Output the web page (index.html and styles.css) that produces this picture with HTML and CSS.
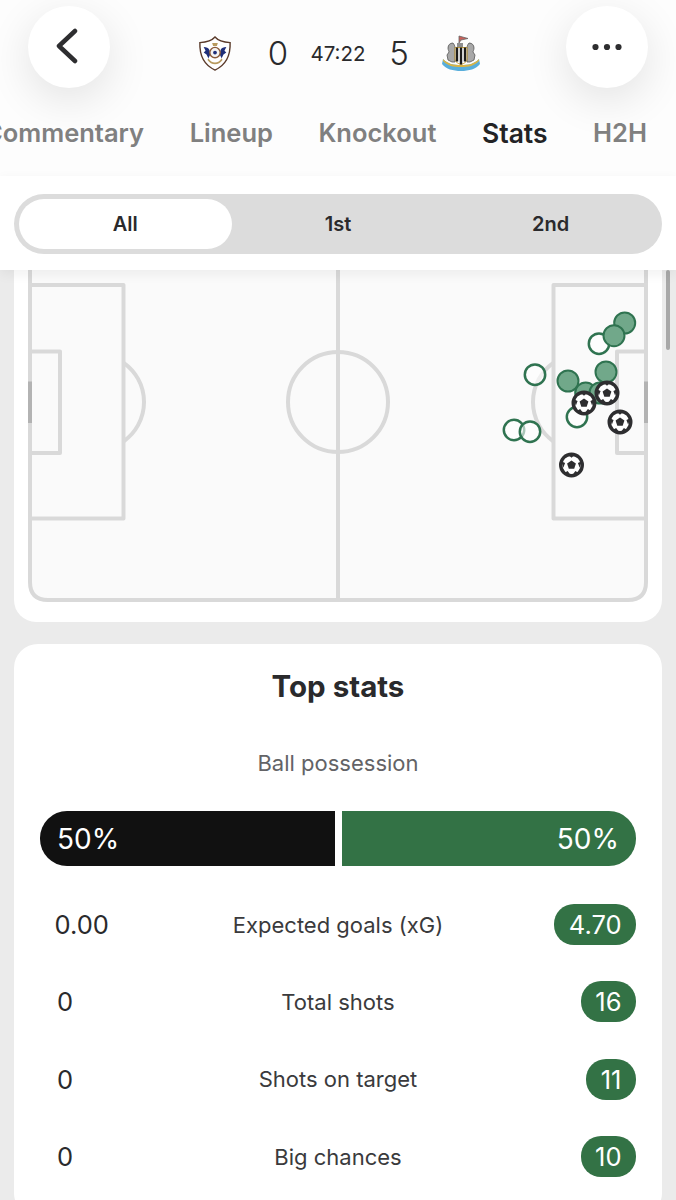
FILE: index.html
```html
<!DOCTYPE html>
<html lang="en">
<head>
<meta charset="utf-8">
<title>Stats</title>
<link rel="stylesheet" href="styles.css">
</head>
<body>
<div class="screen">
  <svg class="defs" width="0" height="0" aria-hidden="true">
    <symbol id="ball" viewBox="-13 -13 26 26">
      <circle r="10.800" class="ball-body"/>
      <path class="ball-spot" d="M0-4.600 4.400-1.400 2.700 3.700H-2.700L-4.400-1.400Z"/>
      <path class="ball-mark" d="M-3.600-10.500H3.600L0-7.200Z M10.200-3.700 8.200 2.800 6.400-1.900Z M7.200 8 .9 10 3.900 6Z M-7.200 8-.9 10-3.900 6Z M-10.200-3.700-8.200 2.800-6.400-1.900Z"/>
    </symbol>
  </svg>

  <header class="header">
    <div class="topbar">
      <button class="round-btn" aria-label="Back">
        <svg class="back-icon" width="26" height="36" viewBox="0 0 26 36"><path d="M21 3 5 18l16 15"/></svg>
      </button>
      <div class="score">
        <svg class="crest crest-home" width="34" height="37" viewBox="0 0 36 38">
          <path class="q-shield" d="M18 1.500C21 5 27 7 34 7.500 34.500 21 30 31 18 36.500 6 31 1.500 21 2 7.500 9 7 15 5 18 1.500Z"/>
          <path class="q-blue" d="M6 12c3 0 5 1 6 3l1 5-2 4-2-4-3-2 2-2ZM30 12c-3 0-5 1-6 3l-1 5 2 4 2-4 3-2-2-2Z"/>
          <path class="q-gold" d="M11 24c3 6 11 6 14 0l1 2c-4 6-12 6-16 0ZM15 8h6l-1 3h-4Z"/>
          <circle class="q-ball" cx="18" cy="18" r="5.500"/>
          <circle class="q-spot" cx="18" cy="18" r="2"/>
        </svg>
        <span class="goal">0</span>
        <span class="clock">47:22</span>
        <span class="goal goal-away">5</span>
        <svg class="crest crest-away" width="38" height="37" viewBox="0 0 38 37">
          <path class="n-flag" d="M17 8V1l9 2.500-7 1.500Z"/>
          <path class="n-tower" d="M15 8h6v5h-6Z"/>
          <path class="n-horse" d="M11 8c-3 0-5 2-5 5 0 2 1 3 1 4l-2 3 1 5 4 2h3V13c0-2-1-4-2-5ZM27 8c3 0 5 2 5 5 0 2-1 3-1 4l2 3-1 5-4 2h-3V13c0-2 1-4 2-5Z"/>
          <path class="n-shield" d="M13 12.500h12V24c0 3-3 4.500-6 5.500-3-1-6-2.500-6-5.500Z"/>
          <path class="n-stripes" d="M15 12.500v14M19 12.500v17M23 12.500v14"/>
          <path class="n-ribbon" d="M1 24c5 5 10 6 18 6s13-1 18-6l1 5c-4 5-11 7-19 7S4 34 0 29Z"/>
          <path class="n-gold" d="M1 24c5 5 10 6 18 6s13-1 18-6v2c-5 5-10 6-18 6S6 31 1 26Z"/>
        </svg>
      </div>
      <button class="round-btn" aria-label="More">
        <svg class="dots" width="32" height="8" viewBox="0 0 32 8"><circle cx="4.500" cy="4" r="3.100"/><circle cx="16" cy="4" r="3.100"/><circle cx="27.500" cy="4" r="3.100"/></svg>
      </button>
    </div>
    <nav class="tabs">
      <span class="tab">Commentary</span>
      <span class="tab">Lineup</span>
      <span class="tab">Knockout</span>
      <span class="tab tab-active">Stats</span>
      <span class="tab">H2H</span>
    </nav>
  </header>

  <section class="period-panel">
    <div class="segment">
      <span class="seg seg-active">All</span>
      <span class="seg">1st</span>
      <span class="seg">2nd</span>
    </div>
  </section>

  <main class="content">
    <section class="card pitch-card">
      <svg class="pitch" width="648" height="352" viewBox="14 270 648 352">
        <path class="turf" d="M30 270H646V584Q646 600 630 600H46Q30 600 30 584Z"/>
        <g class="lines">
          <path d="M30 270V582Q30 600 48 600H628Q646 600 646 582V270"/>
          <path d="M338 270V600"/>
          <circle cx="338" cy="402" r="50"/>
          <path d="M30 285H123.500V518.500H30"/>
          <path d="M30 351.500H60V453H30"/>
          <path d="M124 363A48 48 0 0 1 124 441"/>
          <path d="M646 285H553.500V518.500H646"/>
          <path d="M646 351.500H617V453H646"/>
          <path d="M553 363A48 48 0 0 0 553 441"/>
        </g>
        <path class="goal-mark" d="M30 381.500V423M646 381.500V423"/>
        <g class="shot-off">
          <circle cx="599" cy="343.700" r="10.200"/>
          <circle cx="535" cy="374.700" r="10.200"/>
          <circle cx="514" cy="430" r="10.200"/>
          <circle cx="530" cy="431.700" r="10.200"/>
          <circle cx="577" cy="417" r="10.200"/>
        </g>
        <g class="shot-on">
          <circle cx="624.700" cy="323" r="10.500"/>
          <circle cx="614" cy="335.700" r="10.500"/>
          <circle cx="606" cy="372" r="10.500"/>
          <circle cx="568" cy="381" r="10.500"/>
          <circle cx="585.700" cy="393" r="10.500"/>
          <circle cx="600" cy="393" r="10.500"/>
        </g>
        <use href="#ball" x="571" y="390" width="26" height="26"/>
        <use href="#ball" x="594" y="380" width="26" height="26"/>
        <use href="#ball" x="607" y="409" width="26" height="26"/>
        <use href="#ball" x="558.500" y="452" width="26" height="26"/>
      </svg>
    </section>

    <section class="card stats-card">
      <h2 class="stats-title">Top stats</h2>
      <p class="possession-label">Ball possession</p>
      <div class="possession">
        <div class="poss poss-home">50%</div>
        <div class="poss poss-away">50%</div>
      </div>
      <div class="stat-rows">
        <div class="stat-row"><span class="value">0.00</span><span class="stat-name">Expected goals (xG)</span><span class="value value-win">4.70</span></div>
        <div class="stat-row"><span class="value">0</span><span class="stat-name">Total shots</span><span class="value value-win">16</span></div>
        <div class="stat-row"><span class="value">0</span><span class="stat-name">Shots on target</span><span class="value value-win">11</span></div>
        <div class="stat-row"><span class="value">0</span><span class="stat-name">Big chances</span><span class="value value-win">10</span></div>
      </div>
    </section>
  </main>
  <div class="scrollbar"></div>
</div>
</body>
</html>
```

FILE: styles.css
```css
* { box-sizing: border-box; }
html, body { margin: 0; padding: 0; }
body {
  font-family: Inter, "Liberation Sans", sans-serif;
  color: #2a2a2c;
  background: #ebebeb;
}
.screen {
  position: relative;
  width: 676px;
  height: 1200px;
  overflow: hidden;
}
.defs { position: absolute; }

/* Header */
.header {
  height: 176px;
  background: #fdfdfd;
  padding-top: 6px;
  position: relative;
  overflow: hidden;
}
.topbar {
  display: flex;
  justify-content: space-between;
  align-items: flex-start;
  padding: 0 28px;
}
.round-btn {
  width: 82px;
  height: 82px;
  border: 0;
  border-radius: 50%;
  background: #fff;
  box-shadow: 0 12px 44px rgba(0, 0, 0, 0.11);
  display: flex;
  align-items: center;
  justify-content: center;
  padding: 0;
}
.back-icon { fill: none; stroke: #2e2e30; stroke-width: 4.500; stroke-linecap: round; stroke-linejoin: round; margin-left: -4px; margin-top: -3px; }
.dots { fill: #2e2e30; }
.score {
  margin: 28px 0 0 2px;
  display: flex;
  align-items: center;
  gap: 16px;
  height: 38px;
}
.crest { flex: none; }
.crest-home { margin-right: 18px; }
.crest-away { margin-left: 15px; }
.goal { font-size: 33px; font-weight: 300; width: 24px; text-align: center; }
.goal-away { margin-left: 1px; }
.clock { font-size: 20.500px; font-weight: 400; width: 64px; text-align: center; }

.q-shield { fill: #fff; stroke: #5a3a2a; stroke-width: 1.500; }
.q-blue { fill: #1f2f7a; }
.q-gold { fill: #b89a5e; }
.q-ball { fill: #f4f4f4; stroke: #8a5a3a; stroke-width: 1.500; }
.q-spot { fill: #1f2f7a; }
.n-flag { fill: #c8605a; stroke: #666; stroke-width: 0.800; }
.n-tower { fill: #8f8f8f; }
.n-horse { fill: #a8a8a8; stroke: #555; stroke-width: 0.800; }
.n-shield { fill: #fff; stroke: #c9a23e; stroke-width: 1; }
.n-stripes { fill: none; stroke: #1c1c1c; stroke-width: 2.400; }
.n-gold { fill: #d9b445; }
.n-ribbon { fill: #58aedb; }

.tabs {
  position: absolute;
  right: 29px;
  top: 118px;
  display: flex;
  gap: 45.500px;
  white-space: nowrap;
}
.tab { font-size: 25.500px; line-height: 30px; font-weight: 600; color: #808080; }
.tab-active { color: #232325; font-size: 26.500px; }

/* Period selector */
.period-panel {
  height: 94px;
  padding: 18px 14px 0;
  background: #fff;
  position: relative;
  z-index: 1;
  box-shadow: 0 4px 12px rgba(0, 0, 0, 0.06);
}
.segment {
  height: 60px;
  padding: 5px;
  background: #dcdcdc;
  border-radius: 30px;
  display: grid;
  grid-template-columns: repeat(3, 1fr);
  align-items: stretch;
}
.seg {
  display: flex;
  align-items: center;
  justify-content: center;
  font-size: 20px;
  font-weight: 600;
  border-radius: 25px;
}
.seg-active { background: #fff; }

/* Content */
.content {
  padding: 0 14px;
  display: flex;
  flex-direction: column;
  gap: 22px;
}
.card { background: #fff; border-radius: 24px; }
.pitch-card { height: 352px; border-radius: 0 0 22px 22px; }
.pitch { display: block; }
.turf { fill: #fafafa; }
.lines { fill: none; stroke: #d9d9d9; stroke-width: 4; stroke-linejoin: round; }
.goal-mark { stroke: #b3b3b3; stroke-width: 4; fill: none; }
.shot-on { fill: #71a88a; stroke: #2f7350; stroke-width: 2; }
.shot-off { fill: rgba(255, 255, 255, 0.6); stroke: #2f7350; stroke-width: 2.500; }
.ball-body { fill: #fff; stroke: #2e2e30; stroke-width: 3.400; }
.ball-spot, .ball-mark { fill: #2e2e30; }

.stats-card { padding: 26px 26px 40px; }
.stats-title {
  margin: 0;
  font-size: 29.500px;
  line-height: 32px;
  font-weight: 700;
  text-align: center;
}
.possession-label {
  margin: 49px 0 0;
  font-size: 22px;
  line-height: 24px;
  text-align: center;
  color: #636366;
}
.possession {
  margin-top: 36px;
  display: flex;
  gap: 7px;
  height: 55px;
}
.poss {
  flex: 1;
  display: flex;
  align-items: center;
  font-size: 28px;
  color: #fff;
  padding: 0 17px;
}
.poss-home { background: #111; border-radius: 27px 0 0 27px; }
.poss-away { background: #337245; border-radius: 0 27px 27px 0; justify-content: flex-end; }

.stat-rows {
  margin-top: 38px;
  display: flex;
  flex-direction: column;
  gap: 36.400px;
}
.stat-row {
  position: relative;
  display: flex;
  justify-content: space-between;
  align-items: center;
  height: 41px;
}
.stat-name {
  position: absolute;
  left: 0;
  right: 0;
  text-align: center;
  font-size: 22px;
  color: #3a3a3c;
}
.value {
  min-width: 50px;
  height: 41px;
  padding: 0 14.500px;
  border-radius: 20px;
  font-size: 25.500px;
  display: flex;
  align-items: center;
  justify-content: center;
}
.value-win { background: #337245; color: #fff; }

.scrollbar {
  position: absolute;
  left: 666px;
  top: 270px;
  width: 4px;
  height: 80px;
  border-radius: 2px;
  background: #a8a8a8;
}
```
